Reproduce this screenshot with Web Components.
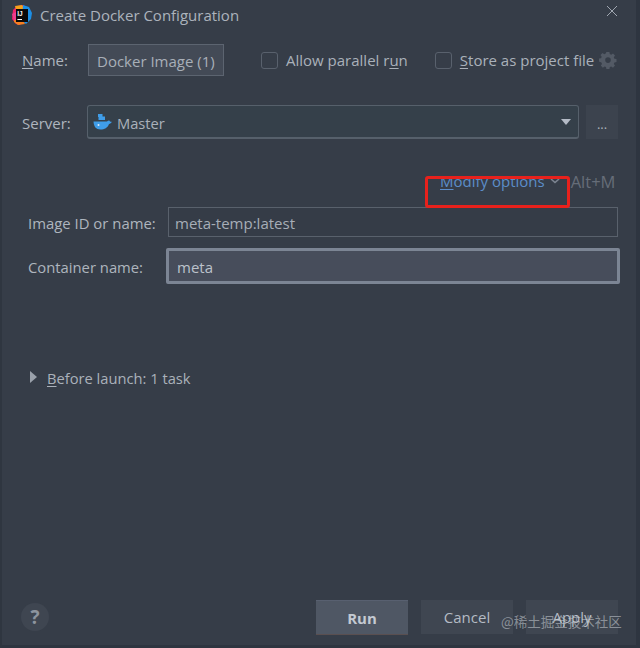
<!DOCTYPE html>
<html><head><meta charset="utf-8">
<style>
html,body{margin:0;padding:0;background:#353c47;}
body{width:640px;height:648px;overflow:hidden;font-family:"Open Sans","Noto Sans",sans-serif;color:#b4bbc4;}
</style>
</head><body>
<run-dialog></run-dialog>
<script>
function def(name,css,html){
  customElements.define(name,class extends HTMLElement{
    connectedCallback(){
      if(this.shadowRoot)return;
      const r=this.attachShadow({mode:'open'});
      const t=document.createElement('template');
      t.innerHTML='<style>'+css+'</style>'+(typeof html==='function'?html(this):html);
      r.appendChild(t.content.cloneNode(true));
    }
  });
}
def('ij-check',`:host{display:inline-flex;align-items:center;gap:8px;font-size:15px;color:#aab1ba;white-space:nowrap}
.b{width:15px;height:15px;border:1px solid #59616d;border-radius:3px;flex:none;box-sizing:content-box}
`,`<span class="b"></span><span><slot></slot></span>`);
def('ij-field',`:host{display:flex;box-sizing:border-box;border:1px solid #59616c;color:#a7aeb7;font-size:15px;padding:2px 6px 0;align-items:center}`,`<slot></slot>`);
def('ij-button',`:host{display:flex;align-items:center;justify-content:center;box-sizing:border-box;width:92px;height:34px;background:#3f4651;color:#b4bbc4;font-size:15px}
:host([primary]){background:#4f5764;font-weight:700;color:#c4cad2;border-top:1px solid #586070;box-shadow:0 1px 0 #5a4f50}`,`<slot></slot>`);
def('run-dialog',`
:host{display:block;position:relative;width:640px;height:648px;box-sizing:border-box;background:#363d48;overflow:hidden;border-left:2px solid #2f3640}
.edge{position:absolute;top:0;bottom:0;right:0;width:4px;background:#2e3540}
.edgeb{position:absolute;left:0;right:0;bottom:0;height:3px;background:#2e3540}
u{text-decoration:underline;text-underline-offset:2px}
.row{display:flex;align-items:center}
.title{height:30px;padding-left:10px;gap:8px;font-size:15px;color:#acb3bc;position:relative}
.close{position:absolute;left:604px;top:5px}
.name{margin-top:14px;height:32px;padding-left:20px;font-size:15px}
.name .lab{width:66px;color:#aeb5be}
.nameinput{width:136px;height:32px;padding:2px 0 0 8px;background:#434a56;border-color:#5c6470;white-space:nowrap;color:#a8afb8}
.name ij-check:nth-of-type(1){margin-left:37px}
.name ij-check:nth-of-type(2){margin-left:27px}
.gear{margin-left:5px;flex:none}
.server{margin-top:29px;height:34px;padding-left:20px;font-size:15px}
.server .lab{width:65px;color:#aeb5be;padding-top:2px}
.combo{width:492px;height:34px;box-sizing:border-box;border:1px solid #56606b;border-width:1px 1px 2px 1px;border-radius:3px;background:#35404a;display:flex;align-items:center;padding-left:5px;gap:5px;color:#aab1ba;position:relative}
.combo span:first-of-type{font-size:14.7px;padding-top:2px}
.combo .arr{margin-left:auto;margin-right:7px;width:0;height:0;border-left:5.5px solid transparent;border-right:5.5px solid transparent;border-top:6px solid #b4bbc6}
.dots{margin-left:7px;width:32px;height:34px;background:#3c434e;color:#aab1ba;display:flex;align-items:center;justify-content:center;font-size:13px;padding-top:5px;box-sizing:border-box;line-height:1}
.mod{margin-top:30px;height:24px;padding-left:438px;font-size:15px;color:#5c8dc9;white-space:nowrap}
.mod svg{margin-left:5px;flex:none}
.mod .k{margin-left:11px;color:#666d78;font-size:16.5px}
.image{margin-top:14px;height:30px;padding-left:26px;font-size:15px}
.image .lab{width:140px;color:#aeb5be;font-size:14.9px;padding-top:2px;white-space:nowrap}
.image ij-field{width:450px;height:30px;box-sizing:border-box;background:#353c47}
.cont{margin-top:11px;height:36px;padding-left:26px;font-size:15px}
.cont .lab{width:138px;color:#aeb5be;font-size:14.8px;padding-top:2px;white-space:nowrap}
.cont ij-field{width:454px;height:36px;box-sizing:border-box;border:3.5px solid #7c8594;border-radius:2px;background:#474d5b;color:#bcc2cb;padding-left:8px}
.before{margin-top:84px;height:20px;padding-left:28px;font-size:14.7px;color:#aab1ba}
.before i{width:0;height:0;border-top:6px solid transparent;border-bottom:6px solid transparent;border-left:7px solid #9aa1ab;margin-right:10px;margin-bottom:2px}
.foot{margin-top:212px;height:34px;position:relative;padding-left:314px;gap:13px}
.help{position:absolute;left:19px;top:3px;width:28px;height:28px;border-radius:50%;background:#3f4651;color:#8d949e;font-weight:700;font-size:19px;display:flex;align-items:center;justify-content:center}
.red{position:absolute;left:423px;top:176px;width:145px;height:32px;box-sizing:border-box;border:3px solid #e8211c;border-radius:3px}
.wm{position:absolute;left:499px;top:612px;font:13.5px/18px "Noto Sans CJK SC","Noto Sans",sans-serif;color:rgba(205,210,216,.55);white-space:nowrap}
`,`
<div class="edge"></div><div class="edgeb"></div>
<div class="row title">
 <svg width="20" height="20" viewBox="0 0 20 20" style="flex:none">
  <path d="M1 5L5 1L12 0L15 10L8 20L4 19L0 14Z" fill="#f0246c"/>
  <path d="M3 1L10 0L13 4L4 5Z" fill="#f7a21a"/>
  <path d="M11 0L17 2L20 8L19 14L14 19L10 16Z" fill="#1c8fe6"/>
  <path d="M2 13L10 14L13 19L6 20L2 17Z" fill="#f57f20"/>
  <path d="M0 9L4 7L5 15L2 15Z" fill="#ec3d8c"/>
  <rect x="4" y="4" width="12" height="13" fill="#0a0a0c"/>
  <text x="5.2" y="10.6" font-family="Liberation Sans" font-weight="700" font-size="6.5" fill="#fff">IJ</text><rect x="5.4" y="14" width="4.6" height="1" fill="#fff"/></svg>
 <span>Create Docker Configuration</span>
 <svg class="close" width="12" height="12" viewBox="0 0 12 12"><path d="M1 1L11 11M11 1L1 11" stroke="#a0a7b1" stroke-width="1"/></svg>
</div>
<div class="row name">
 <span class="lab"><u>N</u>ame:</span>
 <ij-field class="nameinput">Docker Image (1)</ij-field>
 <ij-check>Allow parallel r<u>u</u>n</ij-check>
 <ij-check><span><u>S</u>tore as project file</span></ij-check>
 <svg class="gear" width="18" height="18" viewBox="0 0 18 18"><path fill="#535a65" fill-rule="evenodd" d="M7.4 1h3l.4 2.1 1.4.6L14 2.5l2 2.100-1.200 1.700.6 1.400 2.100.4v3l-2.100.4-.6 1.400 1.200 1.700-2 2.100-1.800-1.200-1.400.6-.4 2.100h-3l-.4-2.100-1.400-.6-1.800 1.200-2-2.100 1.200-1.700-.6-1.400L0 10.600v-3l2.100-.4.6-1.400L1.500 4.100l2-2.100 1.800 1.200 1.400-.6zM9 6.300a2.800 2.800 0 1 0 0 5.600 2.800 2.800 0 0 0 0-5.600z"/></svg>
</div>
<div class="row server">
 <span class="lab">Server:</span>
 <div class="combo">
  <svg width="19" height="16" viewBox="0 0 19 16" style="flex:none"><path fill="#3f9de8" d="M5 0h4.500v2.500H12V6H5.500V3H5zM0.500 7.500H14c.8-.9 1.500-1.100 2.400-1 .2.900.8 1.200 2.400 1.300-.6 1.500-1.600 2-2.800 2.100C14.800 13.500 11.500 15.500 7.500 15.500 3 15.500.8 12.500.5 7.500z"/><circle cx="5.500" cy="11" r="1" fill="#dfeefb"/></svg>
  <span>Master</span><span class="arr"></span>
 </div>
 <div class="dots">...</div>
</div>
<div class="row mod"><span><u>M</u>odify options</span>
 <svg width="10" height="6" viewBox="0 0 10 6"><path d="M1 1L5 4.500L9 1" fill="none" stroke="#7d8592" stroke-width="1.600"/></svg>
 <span class="k">Alt+M</span></div>
<div class="row image"><span class="lab">Image ID or name:</span><ij-field>meta-temp:latest</ij-field></div>
<div class="row cont"><span class="lab">Container name:</span><ij-field>meta</ij-field></div>
<div class="row before"><i></i><span><u>B</u>efore launch: 1 task</span></div>
<div class="row foot"><div class="help">?</div>
 <ij-button primary>Run</ij-button><ij-button>Cancel</ij-button><ij-button>Apply</ij-button></div>
<div class="red"></div>
<div class="wm">@稀土掘金技术社区</div>
`);
</script>
</body></html>
